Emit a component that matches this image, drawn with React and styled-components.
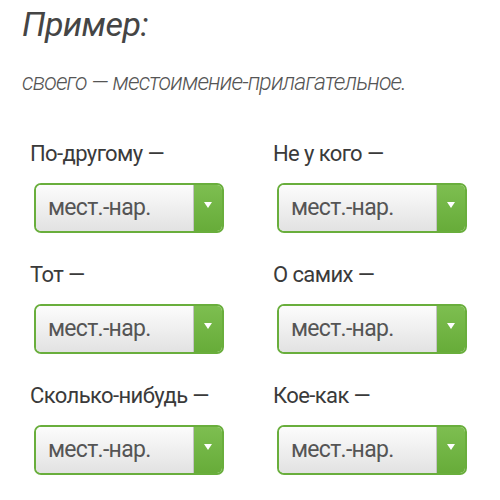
import React from "react";
import styled, { createGlobalStyle } from "styled-components";

const GlobalStyle = createGlobalStyle`
  html, body {
    margin: 0;
    padding: 0;
    background: #fff;
    font-family: Roboto, "Liberation Sans", sans-serif;
  }
`;

const Page = styled.div`
  width: 500px;
  height: 500px;
  overflow: hidden;
  padding: 4px 0 0 22px;
  box-sizing: border-box;
`;

const Title = styled.h2`
  margin: 0;
  font-size: 34px;
  font-style: italic;
  font-weight: 400;
  letter-spacing: -0.5px;
  color: #454545;
  line-height: 40px;
`;

const Example = styled.p`
  margin: 25px 0 0;
  font-size: 23px;
  font-style: italic;
  font-weight: 300;
  letter-spacing: -0.85px;
  color: #555;
  line-height: 28px;
`;

const Grid = styled.div`
  display: grid;
  grid-template-columns: 243px 243px;
  row-gap: 30px;
  margin: 45px 0 0 8px;
`;

const Field = styled.div`
  display: flex;
  flex-direction: column;
`;

const Label = styled.div`
  font-size: 22px;
  letter-spacing: -0.6px;
  color: #3a3a3a;
  line-height: 24px;
`;

const Select = styled.div`
  display: flex;
  width: 190px;
  height: 50px;
  margin: 17px 0 0 4px;
  box-sizing: border-box;
  border: 2px solid #69ae3c;
  border-radius: 7px;
  overflow: hidden;
`;

const Value = styled.div`
  flex: 1;
  display: flex;
  align-items: center;
  padding: 0 0 2px 12px;
  font-size: 23px;
  letter-spacing: -0.7px;
  color: #555;
  background: linear-gradient(#fcfcfc, #e2e2e2);
  border-right: 1px solid #c4c4c4;
`;

const Arrow = styled.div`
  width: 28px;
  display: flex;
  justify-content: center;
  padding-top: 17px;
  box-sizing: border-box;
  background: linear-gradient(#7dbe50, #67ac39);
`;

const fields = [
  "По-другому —",
  "Не у кого —",
  "Тот —",
  "О самих —",
  "Сколько-нибудь —",
  "Кое-как —",
];

const App = () => (
  <>
    <GlobalStyle />
    <Page>
      <Title>Пример:</Title>
      <Example>своего — местоимение-прилагательное.</Example>
      <Grid>
        {fields.map((f, i) => (
          <Field key={i}>
            <Label>{f}</Label>
            <Select>
              <Value>мест.-нар.</Value>
              <Arrow>
                <svg width="8" height="6" viewBox="0 0 8 6">
                  <path d="M0 0 H8 L4 6 Z" fill="#fff" />
                </svg>
              </Arrow>
            </Select>
          </Field>
        ))}
      </Grid>
    </Page>
  </>
);

export default App;
